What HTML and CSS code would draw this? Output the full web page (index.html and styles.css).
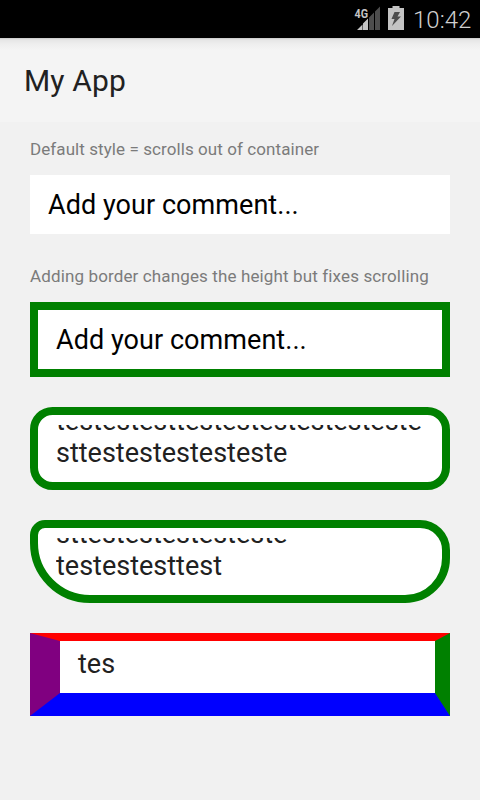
FILE: index.html
```html
<!DOCTYPE html>
<html lang="en">
<head>
<meta charset="utf-8">
<title>My App</title>
<link rel="stylesheet" href="styles.css">
</head>
<body>
<div class="status">
  <svg class="signal" width="27" height="26" viewBox="0 0 27 26">
    <path fill="#4d4d4d" d="M14 11.500 19 6.500V24H14zM20 5.500 25 0.500V24H20z"/>
    <path fill="#c4c4c4" d="M2 24 7.500 18.500V24zM8 17.500 13 12.500V24H8z"/>
    <text class="network" x="-.5" y="11.500" textLength="13.500" lengthAdjust="spacingAndGlyphs">4G</text>
  </svg>
  <svg class="battery" width="16" height="24" viewBox="0 0 16 24">
    <path fill="#c4c4c4" d="M4.500 0h7v2H16v22H0V2h4.500z"/>
    <path fill="#4d4d4d" d="M6.500 6H12L9.500 10.500H13L4 20l2.500-7H3.500z"/>
  </svg>
  <span class="clock">10:42</span>
</div>
<header class="toolbar"><h1>My App</h1></header>
<main class="content">
  <p class="label">Default style = scrolls out of container</p>
  <div class="field plain"><div class="viewport">Add your comment...</div></div>
  <p class="label second">Adding border changes the height but fixes scrolling</p>
  <div class="field bordered"><div class="viewport">Add your comment...</div></div>
  <div class="field tall rounded"><div class="viewport scrolled"><div>testestesttestestestestesteste</div><div>sttestestestesteste</div></div></div>
  <div class="field tall uneven"><div class="viewport scrolled"><div>sttestestestesteste</div><div>testestesttest</div></div></div>
  <div class="field tall multicolor"><div class="viewport short">tes</div></div>
</main>
</body>
</html>
```
FILE: styles.css
```css
* { box-sizing: border-box; }
body {
  margin: 0;
  height: 800px;
  overflow: hidden;
  background: #f1f1f1;
  font-family: Roboto, "Liberation Sans", sans-serif;
}
.status {
  display: flex;
  justify-content: flex-end;
  align-items: flex-start;
  height: 38px;
  padding: 6px 10px 0 0;
  background: #000;
  color: #d0d0d0;
}
.signal { margin-right: 6px; overflow: visible; }
.network { font-size: 13px; font-weight: 700; fill: #c4c4c4; }
.battery { margin-right: 9px; }
.clock {
  width: 57px;
  font-size: 24px;
  font-weight: 300;
  line-height: 28px;
  text-align: right;
}
.toolbar {
  height: 84px;
  padding: 24px 24px 0;
  background: linear-gradient(#c9c9c9 0, #e6e6e6 2px, #eee 6px, #f4f4f4 12px);
}
h1 {
  margin: 0;
  font-size: 30px;
  font-weight: 400;
  line-height: 38px;
  letter-spacing: 0.15px;
  color: #212121;
}
.content { padding: 16px 30px 0; }
.label {
  margin: 0 0 14px;
  font-size: 17px;
  line-height: 23px;
  letter-spacing: 0.08px;
  white-space: nowrap;
  color: #7b7b7b;
}
.second { margin-top: 31px; letter-spacing: 0.13px; }
.field {
  padding: 10px 18px;
  background: #fff;
  color: #212121;
  font-size: 27px;
  line-height: 32px;
  white-space: nowrap;
}
.plain { height: 59px; color: #000; letter-spacing: 0.05px; }
.bordered { height: 75px; border: 8px solid #008000; color: #000; letter-spacing: 0.05px; }
.viewport { padding-top: 4px; }
.tall { height: 83px; margin-top: 30px; border: 8px solid #008000; }
.scrolled {
  display: flex;
  flex-direction: column;
  justify-content: flex-end;
  height: 47px;
  padding: 0 0 3px;
  overflow: hidden;
}
.rounded { border-radius: 22.5px; }
.uneven { border-radius: 15px 30px 45px 60px; }
.multicolor {
  border-style: solid;
  border-width: 8px 15px 23px 30px;
  border-color: #f00 #008000 #00f #800080;
}
.short { padding-top: 0; margin-top: -3px; }
```
